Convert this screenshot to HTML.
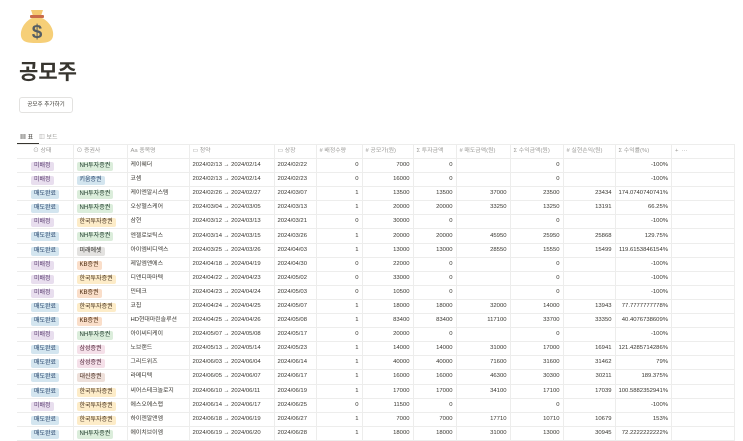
<!DOCTYPE html>
<html><head><meta charset="utf-8"><style>
body{margin:0;width:743px;height:439px;overflow:hidden;background:#fff;font-family:"Liberation Sans","Noto Sans CJK KR",sans-serif;color:#37352f}
.t{position:absolute}
table{position:absolute;left:17px;top:144px;border-collapse:collapse;table-layout:fixed;font-size:5.9px}
td,th{height:13.1px;padding:0 3px;border:1px solid #ededec;white-space:nowrap;overflow:hidden;vertical-align:middle;line-height:9px}
tr td:first-child,tr th:first-child{border-left:none}
th{font-weight:normal;color:#9b9a97;text-align:left;height:13px}
td.n{text-align:right}
.p{display:inline-block;vertical-align:middle;position:relative;top:1.5px;padding:0 3px;line-height:9px;border-radius:2px;font-size:6px}
.a{background:#e8deee;color:#5a3d70}.b{background:#d3e5ef;color:#28456c}
.g{background:#dbeddb;color:#1c3829}.y{background:#fdecc8;color:#402c1b}
.k{background:#fadec9;color:#49290e}.e{background:#e3e2e0;color:#32302c}
.s{background:#f5e0e9;color:#4c2337}.d{background:#eee0da;color:#442a1e}
td.c1{padding-left:14px}
</style></head><body>
<svg class="t" style="left:20px;top:8px" width="34" height="36" viewBox="0 0 34 36">
<path d="M11 2h12l-2 6h-8z" fill="#f4c870"/><rect x="10" y="7" width="14" height="3" rx="1" fill="#c96a4a"/>
<path d="M12 10C4 14 0 22 1 28c1 6 6 7 16 7s15-1 16-7c1-6-3-14-11-18z" fill="#f6cf78"/>
<text x="17" y="30" text-anchor="middle" font-size="19" font-weight="bold" fill="#555d63" font-family="Liberation Sans">$</text></svg>
<div class="t" style="left:19px;top:56px;font-size:21px;font-weight:bold;color:#37352f">공모주</div>
<div class="t" style="left:19px;top:97px;width:52px;height:14px;border:1px solid #e3e2e0;border-radius:3px;font-size:5.6px;line-height:14px;text-align:center">공모주 추가하기</div>
<div class="t" style="left:20px;top:132px;font-size:6px;color:#37352f">▦ 표 <span style="color:#9b9a97;margin-left:4px">▥ 보드</span></div>
<div class="t" style="left:17px;top:143px;width:22px;height:1px;background:#37352f"></div>
<div class="t" style="left:17px;top:144px;width:716px;height:1px;background:#ededec"></div>
<table>
<colgroup><col style="width:56px"><col style="width:54px"><col style="width:62px"><col style="width:85px"><col style="width:42px"><col style="width:46px"><col style="width:51px"><col style="width:43px"><col style="width:54px"><col style="width:53px"><col style="width:52px"><col style="width:55px"><col style="width:63px"></colgroup>
<tr><th style="padding-left:16px">⊙ 상태</th><th>⊙ 증권사</th><th>Aa 종목명</th><th>▭ 청약</th><th>▭ 상장</th><th># 배정수량</th><th># 공모가(원)</th><th>Σ 투자금액</th><th># 매도금액(원)</th><th>Σ 수익금액(원)</th><th># 실현손익(원)</th><th>Σ 수익률(%)</th><th>+ &nbsp;···</th></tr>
<tr><td class="c1"><span class="p a">미배정</span></td><td><span class="p g">NH투자증권</span></td><td>케이웨더</td><td>2024/02/13 → 2024/02/14</td><td>2024/02/22</td><td class="n">0</td><td class="n">7000</td><td class="n">0</td><td></td><td class="n">0</td><td></td><td class="n">-100%</td><td></td></tr>
<tr><td class="c1"><span class="p a">미배정</span></td><td><span class="p b">키움증권</span></td><td>코셈</td><td>2024/02/13 → 2024/02/14</td><td>2024/02/23</td><td class="n">0</td><td class="n">16000</td><td class="n">0</td><td></td><td class="n">0</td><td></td><td class="n">-100%</td><td></td></tr>
<tr><td class="c1"><span class="p b">매도완료</span></td><td><span class="p g">NH투자증권</span></td><td>케이엔알시스템</td><td>2024/02/26 → 2024/02/27</td><td>2024/03/07</td><td class="n">1</td><td class="n">13500</td><td class="n">13500</td><td class="n">37000</td><td class="n">23500</td><td class="n">23434</td><td class="n">174.0740740741%</td><td></td></tr>
<tr><td class="c1"><span class="p b">매도완료</span></td><td><span class="p g">NH투자증권</span></td><td>오상헬스케어</td><td>2024/03/04 → 2024/03/05</td><td>2024/03/13</td><td class="n">1</td><td class="n">20000</td><td class="n">20000</td><td class="n">33250</td><td class="n">13250</td><td class="n">13191</td><td class="n">66.25%</td><td></td></tr>
<tr><td class="c1"><span class="p a">미배정</span></td><td><span class="p y">한국투자증권</span></td><td>삼현</td><td>2024/03/12 → 2024/03/13</td><td>2024/03/21</td><td class="n">0</td><td class="n">30000</td><td class="n">0</td><td></td><td class="n">0</td><td></td><td class="n">-100%</td><td></td></tr>
<tr><td class="c1"><span class="p b">매도완료</span></td><td><span class="p g">NH투자증권</span></td><td>엔젤로보틱스</td><td>2024/03/14 → 2024/03/15</td><td>2024/03/26</td><td class="n">1</td><td class="n">20000</td><td class="n">20000</td><td class="n">45950</td><td class="n">25950</td><td class="n">25868</td><td class="n">129.75%</td><td></td></tr>
<tr><td class="c1"><span class="p b">매도완료</span></td><td><span class="p e">미래에셋</span></td><td>아이엠비디엑스</td><td>2024/03/25 → 2024/03/26</td><td>2024/04/03</td><td class="n">1</td><td class="n">13000</td><td class="n">13000</td><td class="n">28550</td><td class="n">15550</td><td class="n">15499</td><td class="n">119.6153846154%</td><td></td></tr>
<tr><td class="c1"><span class="p a">미배정</span></td><td><span class="p k">KB증권</span></td><td>제일엠앤에스</td><td>2024/04/18 → 2024/04/19</td><td>2024/04/30</td><td class="n">0</td><td class="n">22000</td><td class="n">0</td><td></td><td class="n">0</td><td></td><td class="n">-100%</td><td></td></tr>
<tr><td class="c1"><span class="p a">미배정</span></td><td><span class="p y">한국투자증권</span></td><td>디앤디파마텍</td><td>2024/04/22 → 2024/04/23</td><td>2024/05/02</td><td class="n">0</td><td class="n">33000</td><td class="n">0</td><td></td><td class="n">0</td><td></td><td class="n">-100%</td><td></td></tr>
<tr><td class="c1"><span class="p a">미배정</span></td><td><span class="p k">KB증권</span></td><td>민테크</td><td>2024/04/23 → 2024/04/24</td><td>2024/05/03</td><td class="n">0</td><td class="n">10500</td><td class="n">0</td><td></td><td class="n">0</td><td></td><td class="n">-100%</td><td></td></tr>
<tr><td class="c1"><span class="p b">매도완료</span></td><td><span class="p y">한국투자증권</span></td><td>코칩</td><td>2024/04/24 → 2024/04/25</td><td>2024/05/07</td><td class="n">1</td><td class="n">18000</td><td class="n">18000</td><td class="n">32000</td><td class="n">14000</td><td class="n">13943</td><td class="n">77.7777777778%</td><td></td></tr>
<tr><td class="c1"><span class="p b">매도완료</span></td><td><span class="p k">KB증권</span></td><td>HD현대마린솔루션</td><td>2024/04/25 → 2024/04/26</td><td>2024/05/08</td><td class="n">1</td><td class="n">83400</td><td class="n">83400</td><td class="n">117100</td><td class="n">33700</td><td class="n">33350</td><td class="n">40.4076738609%</td><td></td></tr>
<tr><td class="c1"><span class="p a">미배정</span></td><td><span class="p g">NH투자증권</span></td><td>아이씨티케이</td><td>2024/05/07 → 2024/05/08</td><td>2024/05/17</td><td class="n">0</td><td class="n">20000</td><td class="n">0</td><td></td><td class="n">0</td><td></td><td class="n">-100%</td><td></td></tr>
<tr><td class="c1"><span class="p b">매도완료</span></td><td><span class="p s">삼성증권</span></td><td>노브랜드</td><td>2024/05/13 → 2024/05/14</td><td>2024/05/23</td><td class="n">1</td><td class="n">14000</td><td class="n">14000</td><td class="n">31000</td><td class="n">17000</td><td class="n">16941</td><td class="n">121.4285714286%</td><td></td></tr>
<tr><td class="c1"><span class="p b">매도완료</span></td><td><span class="p s">삼성증권</span></td><td>그리드위즈</td><td>2024/06/03 → 2024/06/04</td><td>2024/06/14</td><td class="n">1</td><td class="n">40000</td><td class="n">40000</td><td class="n">71600</td><td class="n">31600</td><td class="n">31462</td><td class="n">79%</td><td></td></tr>
<tr><td class="c1"><span class="p b">매도완료</span></td><td><span class="p d">대신증권</span></td><td>라메디텍</td><td>2024/06/05 → 2024/06/07</td><td>2024/06/17</td><td class="n">1</td><td class="n">16000</td><td class="n">16000</td><td class="n">46300</td><td class="n">30300</td><td class="n">30211</td><td class="n">189.375%</td><td></td></tr>
<tr><td class="c1"><span class="p b">매도완료</span></td><td><span class="p y">한국투자증권</span></td><td>씨어스테크놀로지</td><td>2024/06/10 → 2024/06/11</td><td>2024/06/19</td><td class="n">1</td><td class="n">17000</td><td class="n">17000</td><td class="n">34100</td><td class="n">17100</td><td class="n">17039</td><td class="n">100.5882352941%</td><td></td></tr>
<tr><td class="c1"><span class="p a">미배정</span></td><td><span class="p y">한국투자증권</span></td><td>에스오에스랩</td><td>2024/06/14 → 2024/06/17</td><td>2024/06/25</td><td class="n">0</td><td class="n">11500</td><td class="n">0</td><td></td><td class="n">0</td><td></td><td class="n">-100%</td><td></td></tr>
<tr><td class="c1"><span class="p b">매도완료</span></td><td><span class="p y">한국투자증권</span></td><td>하이젠알앤엠</td><td>2024/06/18 → 2024/06/19</td><td>2024/06/27</td><td class="n">1</td><td class="n">7000</td><td class="n">7000</td><td class="n">17710</td><td class="n">10710</td><td class="n">10679</td><td class="n">153%</td><td></td></tr>
<tr><td class="c1"><span class="p b">매도완료</span></td><td><span class="p g">NH투자증권</span></td><td>에이치브이엠</td><td>2024/06/19 → 2024/06/20</td><td>2024/06/28</td><td class="n">1</td><td class="n">18000</td><td class="n">18000</td><td class="n">31000</td><td class="n">13000</td><td class="n">30945</td><td class="n">72.2222222222%</td><td></td></tr>
</table>
</body></html>
